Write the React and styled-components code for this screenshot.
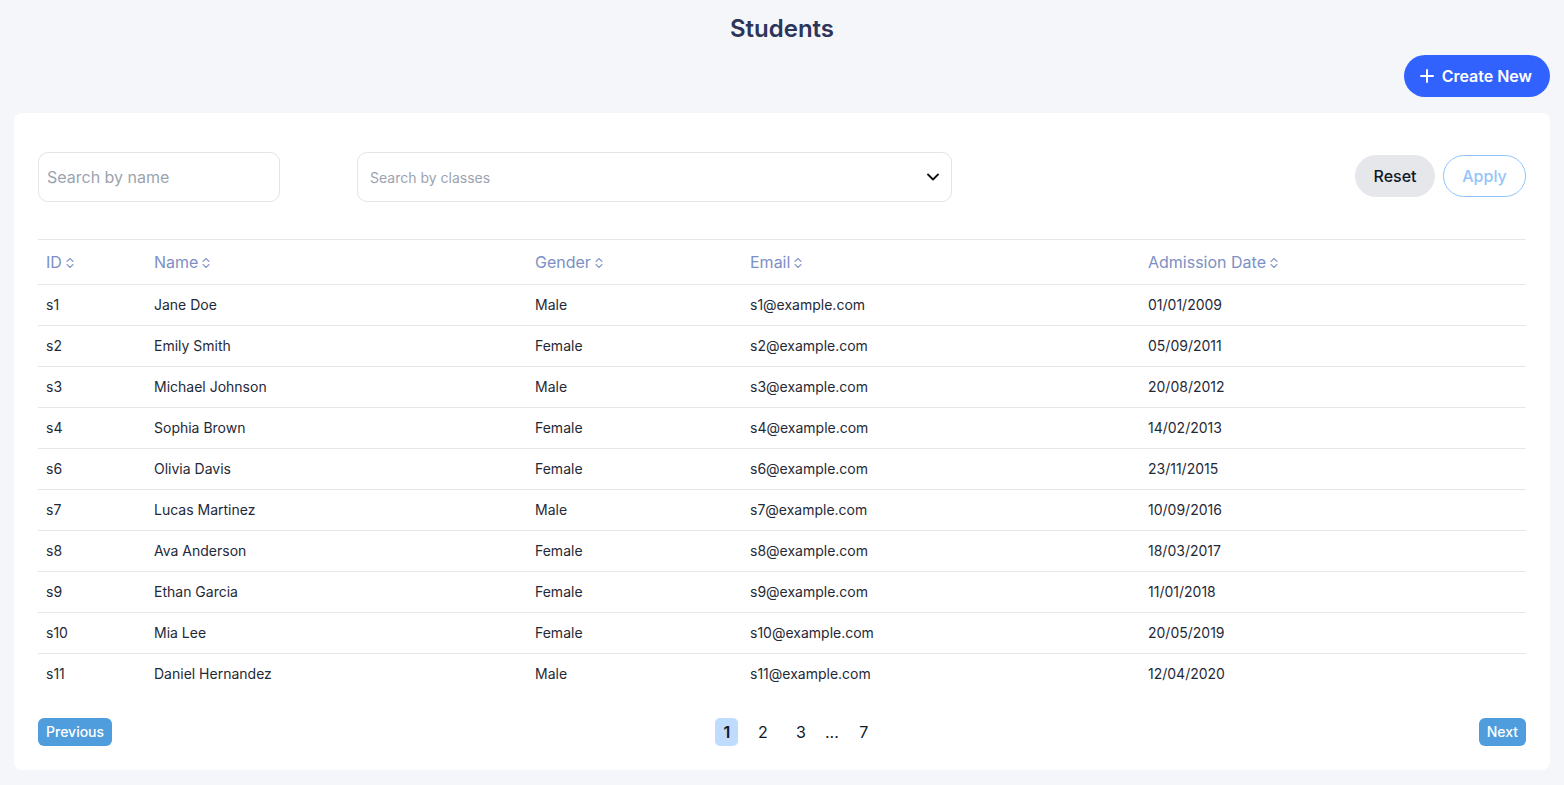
import React from "react";
import styled, { createGlobalStyle } from "styled-components";

const Global = createGlobalStyle`
  * { box-sizing: border-box; }
  body {
    margin: 0;
    background: #f5f6fa;
    font-family: Inter, "Noto Sans", sans-serif;
    color: #1f2937;
  }
`;

const Page = styled.div`
  padding: 13px 14px 15px;
  display: flex;
  flex-direction: column;
`;

const Title = styled.h1`
  margin: 0;
  text-align: center;
  font-size: 24px;
  font-weight: 600;
  line-height: 32px;
  color: #2d3559;
`;

const TopBar = styled.div`
  display: flex;
  justify-content: flex-end;
  margin-top: 10px;
  margin-bottom: 16px;
`;

const CreateButton = styled.button`
  height: 42px;
  padding: 0 18px 0 16px;
  border: none;
  border-radius: 21px;
  background: #3262fd;
  color: #fff;
  font-family: inherit;
  font-size: 16px;
  font-weight: 600;
  display: flex;
  align-items: center;
  gap: 8px;
`;

const Card = styled.div`
  background: #fff;
  border-radius: 8px;
  padding: 39px 24px 24px;
`;

const Filters = styled.div`
  display: flex;
  align-items: flex-start;
  height: 50px;
`;

const NameInput = styled.input`
  width: 242px;
  height: 50px;
  border: 1px solid #e4e4e7;
  border-radius: 10px;
  padding: 0 8px;
  font-family: inherit;
  font-size: 16px;
  color: #1f2937;
  outline: none;
  &::placeholder { color: #9ca3af; }
`;

const Select = styled.div`
  margin-left: 77px;
  width: 595px;
  height: 50px;
  border: 1px solid #e4e4e7;
  border-radius: 10px;
  padding: 0 12px 0 12px;
  display: flex;
  align-items: center;
  justify-content: space-between;
  font-size: 14px;
  color: #9ca3af;
`;

const Spacer = styled.div`
  flex: 1;
`;

const PillButton = styled.button`
  height: 42px;
  margin-top: 3px;
  border-radius: 21px;
  font-family: inherit;
  font-size: 16px;
  font-weight: 500;
  padding: 0 0 1px;
  width: ${(p) => p.$w}px;
  background: ${(p) => (p.$outline ? "#fff" : "#e5e7eb")};
  color: ${(p) => (p.$outline ? "#93c5fd" : "#111827")};
  border: 1px solid ${(p) => (p.$outline ? "#93c5fd" : "#e5e7eb")};
  margin-left: ${(p) => p.$ml || 0}px;
`;

const Table = styled.table`
  margin-top: 37px;
  width: 100%;
  border-collapse: collapse;
  table-layout: fixed;
  border-top: 1px solid #e5e7eb;
`;

const Th = styled.th`
  text-align: left;
  font-weight: 400;
  font-size: 16px;
  color: #7d8fc4;
  height: 45px;
  padding: 0 8px;
  border-bottom: 1px solid #e5e7eb;
  width: ${(p) => p.$w}px;
  white-space: nowrap;
`;

const Td = styled.td`
  font-size: 14px;
  color: #1f2937;
  height: 41px;
  padding: 0 8px 2px;
  border-bottom: ${(p) => (p.$last ? "none" : "1px solid #e5e7eb")};
`;

const SortIcon = styled.svg`
  margin-left: 4px;
  vertical-align: -1px;
`;

const Pager = styled.div`
  margin-top: 23px;
  display: flex;
  align-items: center;
  justify-content: space-between;
  height: 28px;
`;

const NavButton = styled.button`
  height: 28px;
  padding: 0 8px 1px;
  border: none;
  border-radius: 6px;
  background: #4f9ddc;
  color: #fff;
  font-family: inherit;
  font-size: 14px;
  font-weight: 500;
`;

const Pages = styled.div`
  display: flex;
  align-items: center;
`;

const PageNum = styled.span`
  min-width: 23px;
  height: 28px;
  border-radius: 5px;
  display: flex;
  align-items: center;
  justify-content: center;
  font-size: 16px;
  font-weight: ${(p) => (p.$active ? 600 : 400)};
  color: #111827;
  background: ${(p) => (p.$active ? "#bfdbfe" : "transparent")};
  margin-right: ${(p) => p.$mr}px;
`;

const students = [
  ["s1", "Jane Doe", "Male", "s1@example.com", "01/01/2009"],
  ["s2", "Emily Smith", "Female", "s2@example.com", "05/09/2011"],
  ["s3", "Michael Johnson", "Male", "s3@example.com", "20/08/2012"],
  ["s4", "Sophia Brown", "Female", "s4@example.com", "14/02/2013"],
  ["s6", "Olivia Davis", "Female", "s6@example.com", "23/11/2015"],
  ["s7", "Lucas Martinez", "Male", "s7@example.com", "10/09/2016"],
  ["s8", "Ava Anderson", "Female", "s8@example.com", "18/03/2017"],
  ["s9", "Ethan Garcia", "Female", "s9@example.com", "11/01/2018"],
  ["s10", "Mia Lee", "Female", "s10@example.com", "20/05/2019"],
  ["s11", "Daniel Hernandez", "Male", "s11@example.com", "12/04/2020"],
];

const cols = [
  ["ID", 108],
  ["Name", 381],
  ["Gender", 215],
  ["Email", 398],
  ["Admission Date", 386],
];

const Sort = () => (
  <SortIcon width="8" height="12" viewBox="0 0 8 12" fill="none" stroke="#8a9ac9" strokeWidth="1.1" strokeLinecap="round" strokeLinejoin="round">
    <path d="M1 4.5 L4 1.5 L7 4.5" />
    <path d="M1 7.5 L4 10.5 L7 7.5" />
  </SortIcon>
);

export default function App() {
  return (
    <>
      <Global />
      <Page>
        <Title>Students</Title>
        <TopBar>
          <CreateButton>
            <svg width="14" height="14" viewBox="0 0 14 14" stroke="#fff" strokeWidth="2" strokeLinecap="round">
              <path d="M7 1v12M1 7h12" />
            </svg>
            Create New
          </CreateButton>
        </TopBar>
        <Card>
          <Filters>
            <NameInput placeholder="Search by name" />
            <Select>
              <span>Search by classes</span>
              <svg width="12" height="8" viewBox="0 0 12 8" fill="none" stroke="#111" strokeWidth="1.8" strokeLinecap="round" strokeLinejoin="round">
                <path d="M1 1.5 L6 6.5 L11 1.5" />
              </svg>
            </Select>
            <Spacer />
            <PillButton $w={80}>Reset</PillButton>
            <PillButton $w={83} $ml={8} $outline>Apply</PillButton>
          </Filters>
          <Table>
            <thead>
              <tr>
                {cols.map(([label, w]) => (
                  <Th key={label} $w={w}>
                    {label}
                    <Sort />
                  </Th>
                ))}
              </tr>
            </thead>
            <tbody>
              {students.map((row, i) => (
                <tr key={row[0]}>
                  {row.map((cell, j) => (
                    <Td key={j} $last={i === students.length - 1}>{cell}</Td>
                  ))}
                </tr>
              ))}
            </tbody>
          </Table>
          <Pager>
            <NavButton>Previous</NavButton>
            <Pages>
              <PageNum $active $mr={13}>1</PageNum>
              <PageNum $mr={15}>2</PageNum>
              <PageNum $mr={8}>3</PageNum>
              <PageNum $mr={9}>...</PageNum>
              <PageNum $mr={0}>7</PageNum>
            </Pages>
            <NavButton>Next</NavButton>
          </Pager>
        </Card>
      </Page>
    </>
  );
}
